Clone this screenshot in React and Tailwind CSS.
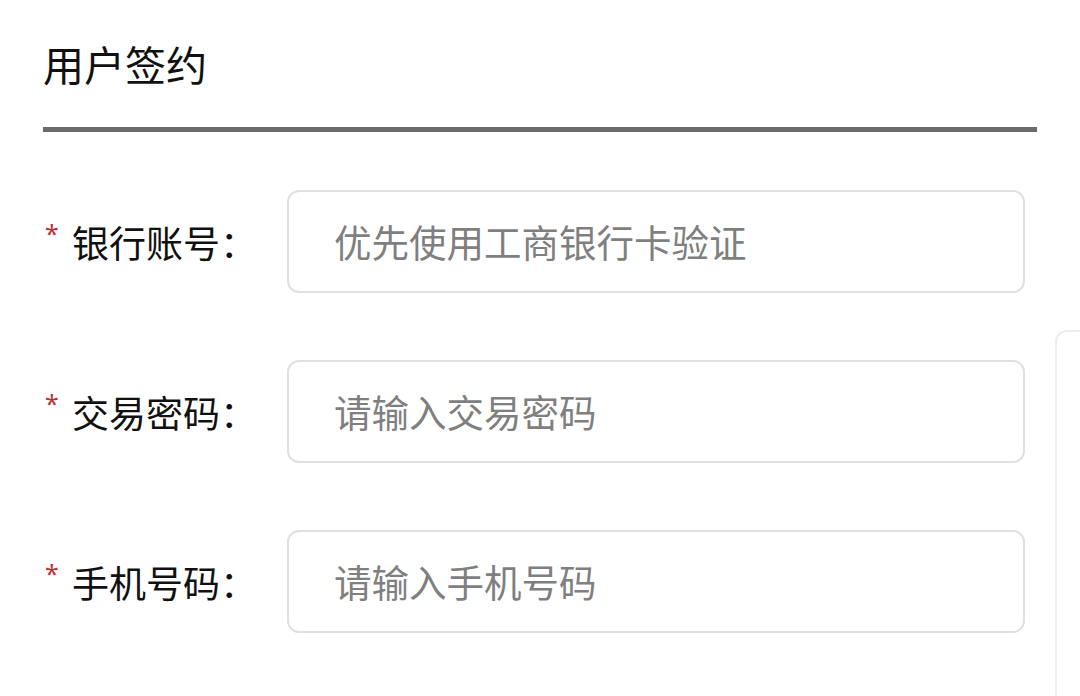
export default function App() {
  const rows = [
    { label: "银行账号", ph: "优先使用工商银行卡验证" },
    { label: "交易密码", ph: "请输入交易密码" },
    { label: "手机号码", ph: "请输入手机号码" },
  ];
  const font = { fontFamily: '"Noto Sans CJK SC", "Noto Sans", sans-serif' };
  return (
    <div className="relative w-[1080px] h-[696px] overflow-hidden bg-white" style={font}>
      <div className="pl-[43px] pr-[43px]">
        <div className="pt-[40px] h-[127px] text-[41px] leading-[46px] text-[#111]">用户签约</div>
        <div className="h-[5px] w-[994px] bg-[#6b6b6b]"></div>
        <div className="flex flex-col gap-[67px] pt-[58px]">
          {rows.map((r) => (
            <div key={r.label} className="flex items-center">
              <div className="w-[244px] flex items-start">
                <span
                  className="w-[29px] pl-[2px] text-[25px] leading-none text-[#b83232] -mt-[1px]"
                  style={{ fontFamily: '"Noto Sans", sans-serif' }}
                >
                  *
                </span>
                <span className="text-[37px] leading-[40px] text-[#111]">{r.label}：</span>
              </div>
              <div className="w-[738px] h-[103px] rounded-[12px] border-2 border-[#e0e0e0] flex items-center pl-[45px] text-[37.5px] text-[#7f7f7f]">
                {r.ph}
              </div>
            </div>
          ))}
        </div>
      </div>
      <div className="absolute left-[1055px] top-[330px] w-[100px] h-[500px] rounded-tl-[12px] border-l-2 border-t-2 border-[#ececec] bg-white"></div>
    </div>
  );
}
